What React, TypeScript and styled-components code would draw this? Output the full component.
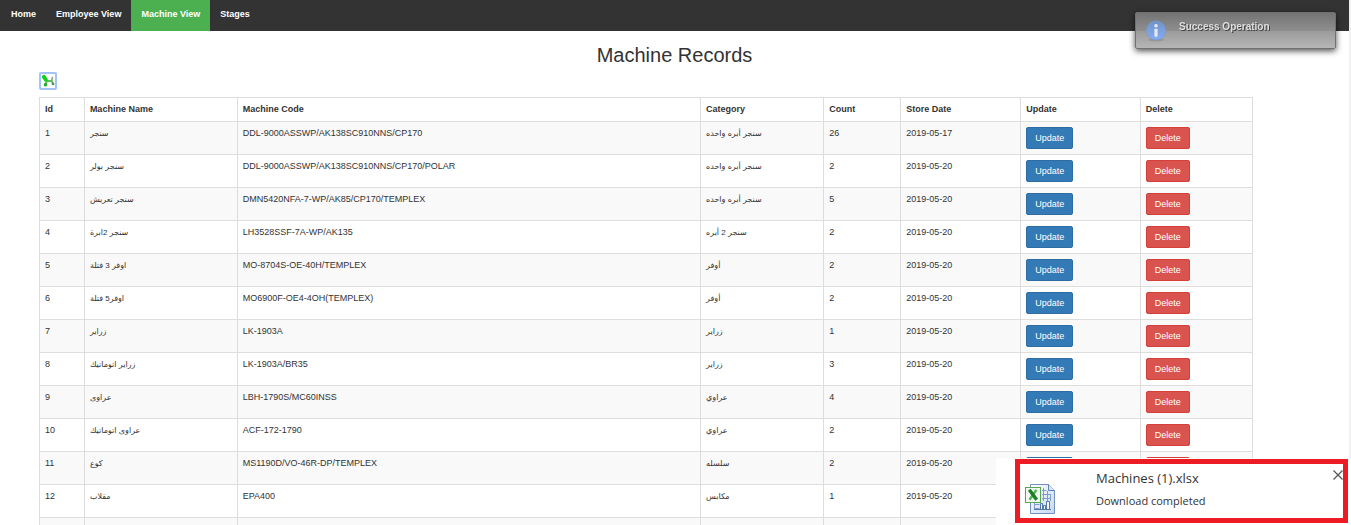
import React from "react";
import styled, { createGlobalStyle } from "styled-components";

const GlobalStyle = createGlobalStyle`
  *, *::before, *::after { box-sizing: border-box; }
  html { scrollbar-width: none; }
  body {
    margin: 0;
    background: #fff;
    color: #333;
    font: 9px/13px "Liberation Sans", "DejaVu Sans", sans-serif;
  }
`;

const Page = styled.div`
  border-right: 2px solid #f1f1f1;
`;

const Nav = styled.nav`
  display: flex;
  padding-left: 1px;
  background: #333;
`;

const NavLink = styled.a<{ $active?: boolean }>`
  padding: 8px 10px 10px;
  font-weight: bold;
  color: #fff;
  text-decoration: none;
  background: ${(p) => (p.$active ? "#4caf50" : "transparent")};
`;

const Title = styled.h1`
  margin: 12px 0 5px;
  font-size: 20px;
  line-height: 24px;
  font-weight: normal;
  text-align: center;
`;

const Content = styled.main`
  width: 90%;
  margin-left: 39px;
`;

const ExportButton = styled.button`
  display: block;
  width: 18px;
  height: 18px;
  margin-bottom: 7px;
  padding: 0;
  border: 2px solid #a3c4fa;
  border-radius: 2px;
  background: #fff;
  svg { display: block; }
`;

const Table = styled.table`
  width: 100%;
  table-layout: fixed;
  border-collapse: collapse;
`;

const Col = styled.col<{ $share?: number }>`
  width: ${(p) => (p.$share ? `${p.$share}%` : "auto")};
`;

const HeadCell = styled.th`
  padding: 5px;
  border: 1px solid #ddd;
  text-align: left;
`;

const Row = styled.tr`
  &:nth-child(odd) { background: #f9f9f9; }
`;

const Cell = styled.td<{ $arabic?: boolean }>`
  padding: 5px;
  border: 1px solid #ddd;
  vertical-align: top;
  font-size: ${(p) => (p.$arabic ? "8px" : "9px")};
`;

const ActionButton = styled.button<{ $danger?: boolean }>`
  display: block;
  height: 22px;
  padding: 0 8px;
  border: 1px solid ${(p) => (p.$danger ? "#d43f3a" : "#2e6da4")};
  border-radius: 2px;
  background: ${(p) => (p.$danger ? "#d9534f" : "#337ab7")};
  color: #fff;
  font: 9px/20px "Liberation Sans", sans-serif;
`;

const Toast = styled.div`
  position: fixed;
  top: 12px;
  right: 15px;
  display: flex;
  gap: 11px;
  width: 201px;
  height: 37px;
  padding: 7px 10px;
  border: 1px solid #707070;
  border-radius: 2px;
  background: linear-gradient(#747474, #8f8f8f 18px, #9b9b9b 18px, #b6b6b6);
  box-shadow: 0 2px 6px rgba(0, 0, 0, 0.7);
  color: #dedede;
  font-size: 10px;
  font-weight: bold;
  line-height: 14px;
  text-shadow: 1px 1px 0 #444;
`;

const DownloadTray = styled.aside`
  position: fixed;
  right: 0;
  bottom: 0;
  width: 355px;
  padding: 1px 3px 2px 19px;
  background: #fff;
`;

const DownloadCard = styled.div`
  display: flex;
  gap: 40px;
  height: 64px;
  padding-left: 5px;
  border: 5px solid #ed1c24;
  font-family: "Open Sans", sans-serif;
`;

const FileIconSlot = styled.div`
  padding-top: 20px;
`;

const FileInfo = styled.div`
  flex: 1;
  padding-top: 3px;
`;

const FileName = styled.div`
  font-size: 13px;
  line-height: 23px;
`;

const FileStatus = styled.div`
  font-size: 11px;
  line-height: 22px;
`;

const CloseButton = styled.button`
  align-self: flex-start;
  width: 10px;
  height: 16px;
  padding: 5px 0 0;
  border: 0;
  background: none;
  svg { display: block; }
`;

const ExportIcon = () => (
  <svg width="14" height="14" viewBox="0 0 14 14" fill="none" strokeLinecap="round">
    <path d="M3 3 L6 7 L11 7 M6 7 L4 11" stroke="#5cc05c" strokeWidth="2" />
    <path d="M2.8 2.8 L4.8 5.6" stroke="#0fd01a" strokeWidth="4" />
    <path d="M11.5 3.5 L10.5 7 L12 10" stroke="#7fa27f" strokeWidth="1.5" />
    <circle cx="4.5" cy="10.8" r="1.8" fill="#1fae27" />
    <circle cx="12" cy="9.8" r="1.4" fill="#3b9a40" />
  </svg>
);

const InfoIcon = () => (
  <svg width="22" height="22" viewBox="0 0 22 22">
    <defs>
      <linearGradient id="info" x1="0" y1="0" x2="0" y2="1">
        <stop offset="0" stopColor="#7193c4" />
        <stop offset="1" stopColor="#86adf5" />
      </linearGradient>
    </defs>
    <ellipse cx="10" cy="20" rx="8" ry="1.5" fill="#8a8a8a" opacity="0.6" />
    <circle cx="10" cy="10.5" r="9.5" fill="url(#info)" stroke="#7599d4" strokeWidth="0.8" />
    <circle cx="10" cy="5.8" r="1.8" fill="#e4e9f2" />
    <rect x="8.4" y="8.8" width="3.2" height="8" rx="0.8" fill="#e4e9f2" />
  </svg>
);

const SpreadsheetIcon = () => (
  <svg width="31" height="31" viewBox="0 0 31 31">
    <defs>
      <linearGradient id="sheet" x1="0" y1="0" x2="1" y2="1">
        <stop offset="0" stopColor="#ffffff" />
        <stop offset="1" stopColor="#c5d8f0" />
      </linearGradient>
    </defs>
    <path d="M5.5 0.5 H23.5 L29.5 6.5 V29.5 H5.5 Z" fill="url(#sheet)" stroke="#7391bd" />
    <path d="M23.5 0.5 V6.5 H29.5" fill="#dce8f7" stroke="#5f80b3" />
    <path d="M17 6.5 H21.5 M17 10.5 H25.5 M17 14.5 H25.5 M9.5 20.5 H14.5 M9.5 24.5 H14.5 M9.5 18.5 V25 M18.5 4 V17 M22.5 7 V17 M25.5 10 V17" fill="none" stroke="#7f9dca" />
    <path d="M15.5 25.5 V19.5 H17.5 V25.5 M18.5 25.5 V21.5 H20.5 V25.5 M21.5 25.5 V17.5 H24.5 V25.5 M9 25.5 H26" fill="#f5f9ff" stroke="#5578ae" />
    <rect x="0.5" y="3.5" width="15" height="15" fill="#f2faef" stroke="#5aa652" />
    <path d="M11.5 5.8 L4.5 15.8" stroke="#55b84f" strokeWidth="2.4" />
    <path d="M4.3 5.8 L11.7 15.8" stroke="#1d7d2a" strokeWidth="3.4" />
  </svg>
);

const CloseIcon = () => (
  <svg width="10" height="10" viewBox="0 0 10 10" stroke="#555" strokeWidth="1.2">
    <path d="M0.5 0.5 L9.5 9.5 M9.5 0.5 L0.5 9.5" />
  </svg>
);

const links = ["Home", "Employee View", "Machine View", "Stages"];

const columns: { label: string; share?: number }[] = [
  { label: "Id", share: 3.7 },
  { label: "Machine Name", share: 12.6 },
  { label: "Machine Code" },
  { label: "Category", share: 10.15 },
  { label: "Count", share: 6.35 },
  { label: "Store Date", share: 9.9 },
  { label: "Update", share: 9.85 },
  { label: "Delete", share: 9.26 },
];

type Machine = [name: string, code: string, category: string, count: number, date: string];

const machines: Machine[] = [
  ["سنجر", "DDL-9000ASSWP/AK138SC910NNS/CP170", "سنجر أبره واحده", 26, "2019-05-17"],
  ["سنجر بولر", "DDL-9000ASSWP/AK138SC910NNS/CP170/POLAR", "سنجر أبره واحده", 2, "2019-05-20"],
  ["سنجر تعريش", "DMN5420NFA-7-WP/AK85/CP170/TEMPLEX", "سنجر أبره واحده", 5, "2019-05-20"],
  ["سنجر 2ابرة", "LH3528SSF-7A-WP/AK135", "سنجر 2 أبره", 2, "2019-05-20"],
  ["اوفر 3 فتلة", "MO-8704S-OE-40H/TEMPLEX", "أوفر", 2, "2019-05-20"],
  ["اوفر5 فتلة", "MO6900F-OE4-4OH(TEMPLEX)", "أوفر", 2, "2019-05-20"],
  ["زراير", "LK-1903A", "زراير", 1, "2019-05-20"],
  ["زراير اتوماتيك", "LK-1903A/BR35", "زراير", 3, "2019-05-20"],
  ["عراوى", "LBH-1790S/MC60INSS", "عراوي", 4, "2019-05-20"],
  ["عراوى اتوماتيك", "ACF-172-1790", "عراوي", 2, "2019-05-20"],
  ["كوع", "MS1190D/VO-46R-DP/TEMPLEX", "سلسله", 2, "2019-05-20"],
  ["مقلاب", "EPA400", "مكابس", 1, "2019-05-20"],
  ["فتلة", "", "", 1, "2019-05-20"],
];

export default function App() {
  return (
    <>
      <GlobalStyle />
      <Page>
        <Nav>
          {links.map((label) => (
            <NavLink key={label} href="#" $active={label === "Machine View"}>
              {label}
            </NavLink>
          ))}
        </Nav>
        <Title>Machine Records</Title>
        <Content>
          <ExportButton aria-label="Export to Excel">
            <ExportIcon />
          </ExportButton>
          <Table>
            <colgroup>
              {columns.map((c) => (
                <Col key={c.label} $share={c.share} />
              ))}
            </colgroup>
            <thead>
              <tr>
                {columns.map((c) => (
                  <HeadCell key={c.label}>{c.label}</HeadCell>
                ))}
              </tr>
            </thead>
            <tbody>
              {machines.map(([name, code, category, count, date], i) => (
                <Row key={i}>
                  <Cell>{i + 1}</Cell>
                  <Cell $arabic>{name}</Cell>
                  <Cell>{code}</Cell>
                  <Cell $arabic>{category}</Cell>
                  <Cell>{count}</Cell>
                  <Cell>{date}</Cell>
                  <Cell>
                    <ActionButton>Update</ActionButton>
                  </Cell>
                  <Cell>
                    <ActionButton $danger>Delete</ActionButton>
                  </Cell>
                </Row>
              ))}
            </tbody>
          </Table>
        </Content>
      </Page>
      <Toast role="status">
        <InfoIcon />
        Success Operation
      </Toast>
      <DownloadTray>
        <DownloadCard>
          <FileIconSlot>
            <SpreadsheetIcon />
          </FileIconSlot>
          <FileInfo>
            <FileName>Machines (1).xlsx</FileName>
            <FileStatus>Download completed</FileStatus>
          </FileInfo>
          <CloseButton aria-label="Close">
            <CloseIcon />
          </CloseButton>
        </DownloadCard>
      </DownloadTray>
    </>
  );
}
